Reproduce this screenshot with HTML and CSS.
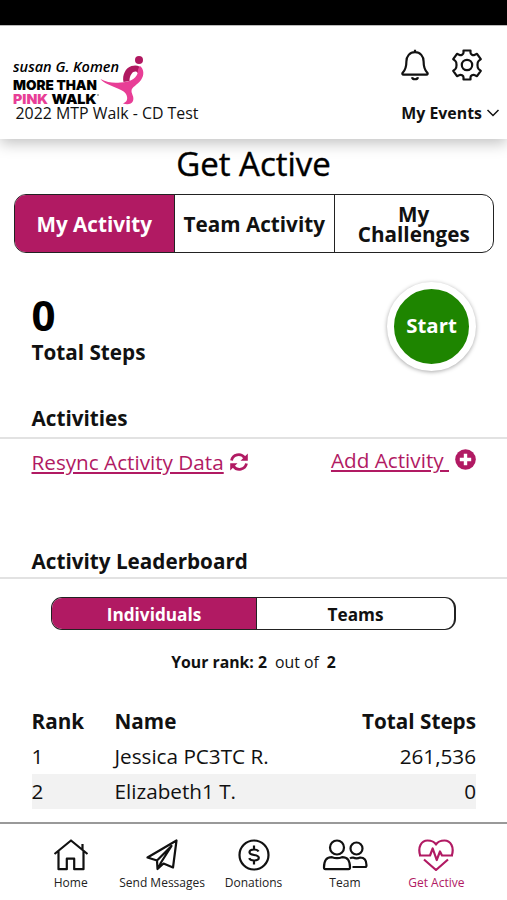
FILE: index.html
```
<!DOCTYPE html>
<html lang="en">
<head>
    <meta charset="UTF-8">
    <meta name="viewport" content="width=device-width, initial-scale=1.0">
    <title>Get Active</title>
    <link rel="stylesheet" href="styles.css">
</head>
<body>
    <div class="status-bar"></div>

    <header class="header">
        <div class="brand">
            <svg class="logo" width="135" height="52" viewBox="0 0 135 52" role="img" aria-label="Susan G. Komen More Than Pink Walk">
                <text class="logo-script" x="0" y="18" textLength="106" lengthAdjust="spacingAndGlyphs">susan G. Komen</text>
                <text class="logo-bold" x="0" y="35.500" textLength="84" lengthAdjust="spacingAndGlyphs">MORE THAN</text>
                <text class="logo-bold logo-pink" x="0" y="49.500" textLength="35" lengthAdjust="spacingAndGlyphs">PINK</text>
                <text class="logo-bold" x="38.500" y="49.500" textLength="45" lengthAdjust="spacingAndGlyphs">WALK</text>
                <circle cx="85" cy="41" r=".8" fill="#555"/>
                <circle cx="126" cy="6" r="4" fill="#b01860"/>
                <path d="M110.500 28c-1.500-7 2-14 8-16 5-1.500 9 0 10 3l-4 4c-1-2-4-2-6 1-1.500 2-2 4-2 7z" fill="#b01860"/>
                <path d="M127 12c4 3 4.500 9 1 14-3.500 5-9.500 7-9.500 11 0 3 3 6 1.500 10-1.500 3.500-6 4-10 2.500 4-1.500 5-4.500 3.500-8.500-1.500-3.500-5-5-10-7-6-2.500-13-5-16-9 7 4 14 4 20 3.500 9-.5 15-3.500 17-9 .500-3 0-4.500 2.500-7.500z" fill="#e83e96"/>
            </svg>
            <div class="event-name">2022 MTP Walk - CD Test</div>
        </div>
        <div class="header-right">
            <div class="header-icons">
                <svg width="28" height="32" viewBox="0 0 28 32" class="icon">
                    <path d="M14 .8v2.400M14 3.200c-5.300 0-8.600 4-8.600 9.300 0 6.700-1.200 8.700-3.700 11.200-.7.900-.3 1.900.8 1.900h23c1.100 0 1.500-1 .8-1.900-2.500-2.500-3.700-4.500-3.700-11.200C22.600 7.200 19.300 3.200 14 3.200zM11 28.200c.6 2.700 5.400 2.700 6 0"/>
                </svg>
                <svg width="32" height="32" viewBox="0 0 32 32" class="icon">
                    <path d="M12.500 1.500h7v2.300c0 1.500 2.500 2.900 3.900 2.200l2.600-1.200 3.800 5.400-2.200 1.800c-1.500 1.300-1.500 6.700 0 8l2.200 1.800-3.800 5.400-2.600-1.200c-1.400-.7-3.900.7-3.900 2.200v2.300h-7v-2.300c0-1.500-2.500-2.900-3.900-2.200L6 27.200l-3.800-5.400L4.400 20c1.500-1.300 1.500-6.700 0-8l-2.200-1.800L6 4.800 8.600 6c1.400.7 3.900-.7 3.900-2.200z"/>
                    <circle cx="16" cy="16" r="5.200"/>
                </svg>
            </div>
            <div class="my-events">My Events
                <svg width="14" height="8" viewBox="0 0 14 8"><path d="M1.500 1l5.500 5.500L12.500 1" fill="none" stroke="#111" stroke-width="1.500"/></svg>
            </div>
        </div>
    </header>

    <main>
        <h1>Get Active</h1>

        <div class="tabs">
            <div class="tab active">My Activity</div>
            <div class="tab">Team Activity</div>
            <div class="tab">My<br>Challenges</div>
        </div>

        <section class="summary">
            <div>
                <div class="steps">0</div>
                <div class="steps-label">Total Steps</div>
            </div>
            <button class="start" type="button">Start</button>
        </section>

        <h2>Activities</h2>
        <div class="links">
            <div class="link-item resync">
                <a href="#">Resync Activity Data</a>
                <svg width="18" height="18" viewBox="0 0 18 18">
                    <path d="M1.500 7.500A7.300 7.300 0 0 1 14.500 4.700M16.500 10.500A7.300 7.300 0 0 1 3.500 13.300" fill="none" stroke="#b11a63" stroke-width="2.800"/>
                    <path d="M17.800.5v7.300h-7.300zM.2 17.500v-7.300h7.300z" fill="#b11a63"/>
                </svg>
            </div>
            <div class="link-item">
                <a href="#">Add Activity&nbsp;</a>
                <svg class="plus" width="21" height="21" viewBox="0 0 21 21">
                    <circle cx="10.500" cy="10.500" r="10.300" fill="#b11a63"/>
                    <path d="M10.500 4.800v11.400M4.800 10.500h11.400" stroke="#fff" stroke-width="3.400"/>
                </svg>
            </div>
        </div>

        <h2 class="leaderboard-title">Activity Leaderboard</h2>
        <div class="switch">
            <div class="switch-item active">Individuals</div>
            <div class="switch-item">Teams</div>
        </div>
        <div class="rank-line"><b>Your rank: 2</b><span>out of</span><b>2</b></div>

        <table>
            <thead>
                <tr><th class="rank">Rank</th><th>Name</th><th class="total">Total Steps</th></tr>
            </thead>
            <tbody>
                <tr><td>1</td><td>Jessica PC3TC R.</td><td class="total">261,536</td></tr>
                <tr class="shaded"><td>2</td><td>Elizabeth1 T.</td><td class="total">0</td></tr>
            </tbody>
        </table>
    </main>

    <nav class="bottom-nav">
        <a class="nav-item" href="#">
            <svg width="36" height="32" viewBox="0 0 36 32" class="icon">
                <path d="M1.500 15L18 1.500 34.500 15M29.500 10.500V5M5.500 12v18.200h8.300V19.700h7.400v10.500h9.300V12"/>
            </svg>
            Home
        </a>
        <a class="nav-item" href="#">
            <svg width="32" height="32" viewBox="0 0 32 32" class="icon">
                <path d="M1.500 18.500L30.500 1.500 27 28.500l-9.500-4-6 5.500-.5-8.500zM11 21.500L25.500 7 15 23.500l-3 6"/>
            </svg>
            Send Messages
        </a>
        <a class="nav-item" href="#">
            <svg width="32" height="32" viewBox="0 0 32 32" class="icon">
                <circle cx="16" cy="16" r="14.500"/>
                <path d="M16 6.500v4M16 21.500v4M20.500 12.500c-.7-1.500-2.500-2-4.500-2-2.500 0-4.500 1-4.500 2.800 0 4 9.300 1.400 9.300 5.500 0 1.800-2.200 2.700-4.800 2.700-2.300 0-4.200-.7-4.800-2.300"/>
            </svg>
            Donations
        </a>
        <a class="nav-item" href="#">
            <svg width="46" height="32" viewBox="0 0 46 32" class="icon">
                <circle cx="15" cy="8.500" r="7"/>
                <circle cx="34.500" cy="9.500" r="6"/>
                <path d="M2 28.500c0-7 2-10.300 8-10.300 3 1.200 7 1.200 10 0 6 0 8 3.300 8 10.300 0 1-.5 1.700-1.500 1.700h-23c-1 0-1.500-.7-1.500-1.700zM28 19.500c.7-.6 1.700-1 3-1 2.200 1 5 1 7.200 0 4.800 0 6.300 3 6.300 7.700 0 1-.6 1.800-1.500 1.800H30.500"/>
            </svg>
            Team
        </a>
        <a class="nav-item current" href="#">
            <svg width="36" height="32" viewBox="0 0 36 32" class="icon">
                <path d="M1 16.500h11l2.700-7 4 11.500 3.300-8.500 2 4h11M2.200 16.500C-.5 8 3.500 1.500 9.500 1.500c4 0 7 1.500 8.500 4 1.500-2.500 4.500-4 8.500-4 6 0 10 6.500 7.300 15M6 20.500L18 31l12-10.500"/>
            </svg>
            Get Active
        </a>
    </nav>
</body>
</html>
```

FILE: styles.css
```
* {
    box-sizing: border-box;
}
body {
    margin: 0;
    height: 900px;
    display: flex;
    flex-direction: column;
    overflow: hidden;
    font-family: "Open Sans", "Noto Sans", sans-serif;
    color: #111;
    background: #fff;
}
.status-bar {
    height: 25px;
    background: #000;
    flex: none;
}
.header {
    height: 114px;
    flex: none;
    display: flex;
    justify-content: space-between;
    padding: 0 7px 0 13px;
    border-top: 1px solid #bbb;
    box-shadow: 0 4px 14px rgba(0, 0, 0, 0.25);
}
.brand {
    padding-top: 28px;
}
.logo {
    display: block;
}
.logo-script {
    font-size: 15px;
    font-style: italic;
    font-weight: 600;
}
.logo-bold {
    font-family: Inter, sans-serif;
    font-size: 13.5px;
    font-weight: 900;
}
.logo-pink {
    fill: #e83e96;
}
.event-name {
    font-size: 15.9px;
    line-height: 18px;
    margin: -2px 0 0 2.5px;
}
.header-right {
    display: flex;
    flex-direction: column;
    align-items: flex-end;
    padding-top: 23px;
}
.header-icons {
    display: flex;
    gap: 22px;
    padding-right: 17px;
}
.icon {
    fill: none;
    stroke: #111;
    stroke-width: 2.2;
    stroke-linejoin: round;
}
.my-events {
    display: flex;
    align-items: center;
    gap: 4px;
    margin-top: 21px;
    font-size: 15.9px;
    line-height: 22px;
    font-weight: 700;
}
main {
    flex: 1;
}
h1 {
    margin: 4px 0 10px;
    font-size: 33px;
    line-height: 41px;
    font-weight: 500;
    text-align: center;
    color: #000;
    -webkit-text-stroke: 0.4px #000;
}
.tabs {
    display: flex;
    height: 59px;
    margin: 0 13px 0 13.5px;
    border: 1px solid #222;
    border-radius: 12px;
    overflow: hidden;
}
.tab {
    flex: 1;
    display: flex;
    align-items: center;
    justify-content: center;
    padding-top: 1px;
    text-align: center;
    white-space: nowrap;
    font-size: 20.7px;
    line-height: 20.5px;
    font-weight: 700;
}
.tab + .tab,
.switch-item + .switch-item {
    border-left: 1px solid #222;
}
.tab.active {
    flex: none;
    width: 159.5px;
}
.active {
    background: #b11a63;
    color: #fff;
}
.summary {
    display: flex;
    justify-content: space-between;
    height: 92px;
    margin: 28px 31px 0 31.5px;
}
.steps {
    margin-top: 9px;
    font-size: 42px;
    line-height: 50px;
    font-weight: 700;
    color: #000;
}
.steps-label {
    font-size: 20.7px;
    line-height: 24px;
    font-weight: 700;
}
.start {
    width: 89px;
    height: 89px;
    margin-top: 1px;
    padding: 0 0 4px;
    border: 7px solid #fff;
    border-radius: 50%;
    background: #1e8500;
    box-shadow: 0 1px 4px rgba(0, 0, 0, 0.35);
    color: #fff;
    font-family: inherit;
    font-size: 20.4px;
    font-weight: 700;
}
h2 {
    margin: 30px 0 0;
    padding: 0 31.5px 4px;
    font-size: 20.7px;
    line-height: 30px;
    font-weight: 700;
    border-bottom: 2px solid #e2e2e2;
}
.links {
    display: flex;
    justify-content: space-between;
    align-items: flex-start;
    height: 80px;
    padding: 7px 31px 0 31.5px;
}
.link-item {
    display: flex;
    align-items: center;
    gap: 6px;
    font-size: 20.7px;
    line-height: 28px;
}
.resync {
    padding-top: 2px;
}
.plus {
    margin-bottom: 2px;
}
.link-item a {
    color: #b11a63;
    text-decoration: underline;
    text-underline-offset: 2px;
}
.leaderboard-title {
    margin-top: 27px;
    padding-bottom: 1px;
}
.switch {
    display: flex;
    height: 33px;
    margin: 18px 51px 0;
    border: 1px solid #222;
    border-right-width: 2px;
    border-radius: 11px;
    overflow: hidden;
}
.switch-item {
    flex: 1;
    text-align: center;
    font-size: 17.2px;
    line-height: 33px;
    font-weight: 700;
}
.switch-item.active {
    flex: none;
    width: 204px;
}
.rank-line {
    display: flex;
    justify-content: center;
    gap: 8px;
    margin-top: 21px;
    font-size: 15.8px;
    line-height: 22px;
}
table {
    width: 444.5px;
    margin: 31px 0 0 31.5px;
    border-collapse: collapse;
    font-size: 20.7px;
}
th,
td {
    height: 35px;
    padding: 0;
    line-height: 35px;
    text-align: left;
}
.rank {
    width: 83px;
}
.total {
    text-align: right;
}
.shaded {
    background: #f2f2f2;
}
.bottom-nav {
    display: flex;
    flex: none;
    height: 78px;
    padding: 15px 25px 0;
    border-top: 2px solid #999;
    background: #fff;
}
.nav-item {
    flex: 1 1 0;
    display: flex;
    flex-direction: column;
    align-items: center;
    gap: 3px;
    color: #222;
    text-decoration: none;
    white-space: nowrap;
    font-size: 12px;
    line-height: 18px;
}
.current {
    color: #b11a63;
}
.current .icon {
    stroke: #b11a63;
}
```
